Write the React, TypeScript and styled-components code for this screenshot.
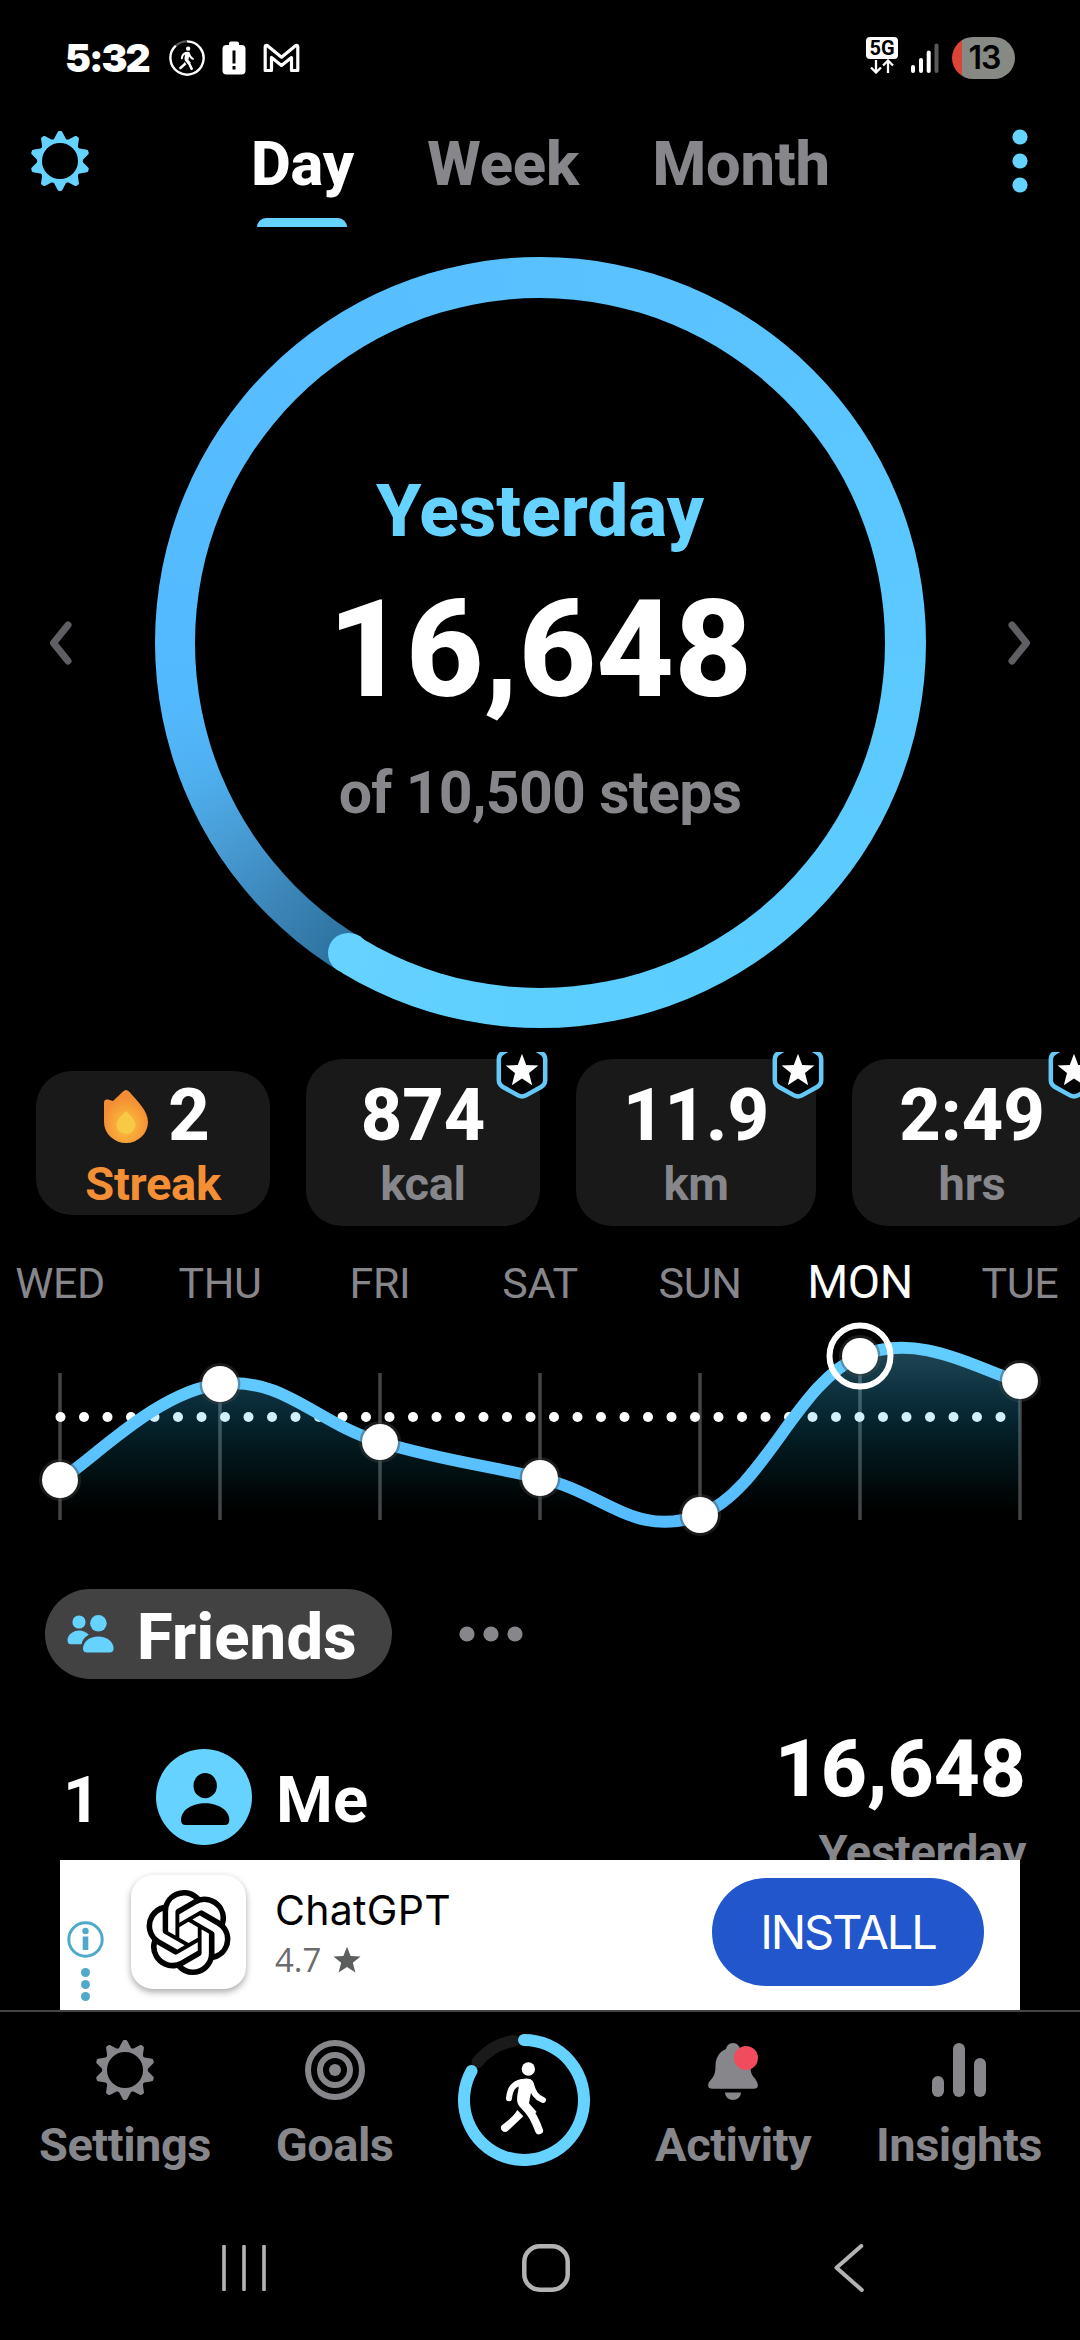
import React from "react";
import styled, { createGlobalStyle } from "styled-components";

const BLUE = "#65d2ff";
const GREY = "#86868b";
const UI = `Roboto, "Noto Sans", sans-serif`;
const SYS = `Inter, Roboto, sans-serif`;

const Global = createGlobalStyle`
  html, body { margin: 0; padding: 0; background: #000; }
  * { box-sizing: border-box; }
  svg { display: block; flex: none; }
`;

const Screen = styled.div`
  width: 1080px;
  height: 2340px;
  display: flex;
  flex-direction: column;
  overflow: hidden;
  background: #000;
  color: #fff;
  font-family: ${UI};
  font-weight: 700;
`;

/* ---------- status bar ---------- */

const StatusBar = styled.div`
  height: 115px;
  flex: none;
  display: flex;
  align-items: center;
  justify-content: space-between;
  padding: 0 65px 0 65px;
`;
const StatusSide = styled.div<{ $gap: number }>`
  display: flex;
  align-items: center;
  gap: ${(p) => p.$gap}px;
`;
const Clock = styled.span`
  font: 900 39px/48px ${SYS};
  letter-spacing: -2px;
  width: 87px;
  white-space: nowrap;
`;
const Network = styled.div`
  display: flex;
  flex-direction: column;
  align-items: center;
  width: 32px;
  margin-top: -4px;
`;
const NetworkTag = styled.span`
  width: 32px;
  height: 22px;
  border-radius: 4px;
  background: #fff;
  color: #000;
  text-align: center;
  font: 700 20px/22px ${UI};
`;
const Battery = styled.div`
  width: 63px;
  height: 42px;
  border-radius: 21px;
  background: linear-gradient(90deg, #db4437 0 10px, #868984 10px);
  color: #000;
  text-align: center;
  padding-left: 2px;
  font: 600 32px/42px ${SYS};
  letter-spacing: -1px;
`;

/* ---------- header ---------- */

const Header = styled.header`
  height: 112px;
  flex: none;
  display: flex;
  align-items: flex-start;
  padding: 0 52px 0 30px;
`;
const IconSlot = styled.div<{ $end?: boolean }>`
  height: 92px;
  display: flex;
  align-items: center;
  margin-left: ${(p) => (p.$end ? "auto" : "0")};
`;
const Tabs = styled.nav`
  display: flex;
  gap: 73.5px;
  margin-left: 161px;
`;
const Tab = styled.div<{ $on?: boolean }>`
  display: flex;
  flex-direction: column;
  align-items: center;
  font-size: 61.4px;
  font-weight: 800;
  letter-spacing: -0.2px;
  line-height: 98px;
  color: ${(p) => (p.$on ? "#fff" : GREY)};
  &::after {
    content: "";
    width: 90px;
    height: 9px;
    margin-top: 5px;
    border-radius: 9px 9px 0 0;
    background: ${(p) => (p.$on ? BLUE : "transparent")};
  }
`;

/* ---------- body ---------- */

const Content = styled.main`
  flex: 1;
  min-height: 0;
  overflow: hidden;
`;
const Hero = styled.section`
  display: flex;
  align-items: center;
  justify-content: space-between;
  height: 825px;
  padding: 30px 48px 24px;
`;
const Ring = styled.div`
  position: relative;
  width: 771px;
  height: 771px;
  padding: 40.5px;
  border-radius: 50%;
  background: conic-gradient(
    from 211deg,
    #2b709c 0deg,
    #3c86b9 15deg,
    #489dd5 27deg,
    #4fb0f0 38deg,
    #53b9ff 50deg,
    #5ac1ff 150deg,
    #5ccaff 260deg,
    #5ccfff 330deg,
    #65d2ff 360deg
  );
`;
const RingCap = styled.i`
  position: absolute;
  left: 173.5px;
  top: 675.5px;
  width: 40.5px;
  height: 40.5px;
  border-radius: 50%;
  background: ${BLUE};
`;
const RingBody = styled.div`
  height: 100%;
  border-radius: 50%;
  background: #000;
  display: flex;
  flex-direction: column;
  align-items: center;
  justify-content: center;
  padding-top: 23px;
`;
const HeroDay = styled.div`
  font-size: 73px;
  font-weight: 800;
  line-height: 100px;
  color: ${BLUE};
`;
const HeroSteps = styled.div`
  font-size: 135px;
  font-weight: 800;
  line-height: 178px;
`;
const HeroGoal = styled.div`
  font-size: 59px;
  line-height: 108px;
  letter-spacing: -0.7px;
  color: ${GREY};
`;

const Stats = styled.section`
  display: flex;
  align-items: center;
  gap: 36px;
  height: 183px;
  padding: 7px 0 9px 36px;
  overflow: hidden;
`;
const StatCard = styled.div<{ $w: number; $h?: number }>`
  position: relative;
  flex: none;
  width: ${(p) => p.$w}px;
  height: ${(p) => p.$h ?? 167}px;
  border-radius: 36px;
  background: #191919;
  display: flex;
  flex-direction: column;
  align-items: center;
  justify-content: center;
`;
const StatValue = styled.div<{ $icon?: boolean }>`
  display: flex;
  align-items: center;
  gap: 20px;
  padding-left: ${(p) => (p.$icon ? 8 : 0)}px;
  font-size: 72px;
  font-weight: 800;
  line-height: 83px;
`;
const StatUnit = styled.div<{ $hot?: boolean }>`
  font-size: 47px;
  line-height: 54px;
  letter-spacing: -0.3px;
  color: ${(p) => (p.$hot ? "#f48f35" : GREY)};
`;
const Badge = styled.div`
  position: absolute;
  right: -9px;
  top: -19px;
`;

const Days = styled.div`
  display: grid;
  grid-template-columns: repeat(7, 160px);
  align-items: baseline;
  margin: 0 -20px;
  padding-top: 12px;
  height: 84px;
`;
const DayName = styled.span<{ $on?: boolean }>`
  text-align: center;
  font-weight: 400;
  font-size: ${(p) => (p.$on ? 47 : 43)}px;
  line-height: 70px;
  letter-spacing: -0.4px;
  color: ${(p) => (p.$on ? "#fff" : GREY)};
`;

const FriendsBar = styled.div`
  display: flex;
  align-items: center;
  gap: 67px;
  padding: 40px 0 0 45px;
`;
const Pill = styled.div`
  width: 347px;
  height: 90px;
  border-radius: 45px;
  background: #424242;
  display: flex;
  align-items: center;
  gap: 23px;
  padding-left: 22px;
  font-size: 65px;
  font-weight: 800;
  line-height: 94px;
`;
const PillText = styled.span`
  padding-top: 6px;
  letter-spacing: 0.2px;
`;
const Row = styled.div`
  display: flex;
  align-items: center;
  height: 164px;
  margin-top: 42px;
  padding: 0 54px 0 63px;
`;
const RowMain = styled.div`
  display: flex;
  align-items: center;
  height: 164px;
  padding-bottom: 12px;
  font-size: 65px;
`;
const Rank = styled.span`
  width: 93px;
  padding-top: 6px;
`;
const Name = styled.span`
  padding-top: 6px;
  margin-left: 24px;
`;
const RowScore = styled.div`
  margin-left: auto;
  padding-top: 2px;
  text-align: right;
`;
const Score = styled.div`
  font-size: 80px;
  font-weight: 800;
  line-height: 96px;
`;
const ScoreDay = styled.div`
  font-size: 47px;
  line-height: 70px;
  letter-spacing: -0.3px;
  color: ${GREY};
`;

/* ---------- ad ---------- */

const Ad = styled.aside`
  flex: none;
  height: 150px;
  margin: 0 60px;
  background: #fff;
  color: #000;
  display: flex;
  align-items: flex-start;
`;
const AdMarks = styled.div`
  width: 51px;
  padding: 61px 0 0 7px;
`;
const AdIcon = styled.div`
  width: 115px;
  height: 114px;
  margin: 15px 0 0 20px;
  border-radius: 22px;
  background: #fff;
  box-shadow: 0 3px 7px rgba(0, 0, 0, 0.35);
  display: flex;
  align-items: center;
  justify-content: center;
`;
const AdText = styled.div`
  margin: 25px 0 0 29px;
`;
const AdTitle = styled.div`
  font: 400 41px/50px ${SYS};
  letter-spacing: 0.3px;
`;
const AdRating = styled.div`
  display: flex;
  align-items: center;
  gap: 12px;
  margin-top: 2px;
  color: #6b6b70;
  font: 400 33px/46px "Open Sans", sans-serif;
`;
const Install = styled.button`
  margin: 18px 36px 0 auto;
  width: 272px;
  height: 108px;
  border: 0;
  border-radius: 54px;
  background: #2156cd;
  color: #fff;
  padding: 0;
  font: 400 47px/108px ${SYS};
  letter-spacing: -2.1px;
`;

/* ---------- bottom bars ---------- */

const BottomNav = styled.nav`
  flex: none;
  height: 190px;
  border-top: 2px solid #444;
  display: flex;
  justify-content: space-between;
  padding: 28px 38px 0 39px;
`;
const NavItem = styled.div`
  display: flex;
  flex-direction: column;
  align-items: center;
  gap: 17px;
  font-size: 47px;
  line-height: 56px;
  letter-spacing: -0.5px;
  color: ${GREY};
`;
const NavCenter = styled.div`
  margin-top: -6px;
`;
const SystemBar = styled.div`
  flex: none;
  height: 140px;
  display: flex;
  align-items: center;
  padding: 0 0 4px 222px;
  gap: 256px;
`;
const BackKey = styled.div`
  padding-left: 8px;
`;

/* ---------- drawings ---------- */

function Gear({ color }: { color: string }) {
  let d = "";
  for (let i = 0; i < 10; i++) {
    const at = (deg: number, r: number) => {
      const a = ((deg - 90) * Math.PI) / 180;
      return `${(30 + r * Math.cos(a)).toFixed(2)} ${(30 + r * Math.sin(a)).toFixed(2)}`;
    };
    const a = i * 36;
    d += `${i ? "L" : "M"}${at(a - 2, 28.4)}L${at(a + 2, 28.4)}L${at(a + 11.5, 22.2)}Q${at(a + 18, 20.2)} ${at(a + 24.5, 22.2)}`;
  }
  return (
    <svg width="60" height="60" viewBox="0 0 60 60">
      <path
        d={`${d}ZM30 10.5a19.5 19.5 0 1 0 0 39a19.5 19.5 0 1 0 0-39Z`}
        fill={color}
        fillRule="evenodd"
        stroke={color}
        strokeWidth="3"
        strokeLinejoin="round"
      />
    </svg>
  );
}

function WalkerShape() {
  return (
    <g fill="none" stroke="#fff" strokeLinecap="round" strokeLinejoin="round">
      <circle cx="295" cy="177" r="20" fill="#fff" stroke="none" />
      <path d="M276 216C248 222 240 238 237 265" strokeWidth="18" />
      <path d="M302 222C310 248 318 262 339 270" strokeWidth="18" />
      <path
        d="M262 214C275 204 300 201 308 213C315 224 311 236 303 248L297 280L320 306L300 322L266 286C258 272 262 255 266 234Z"
        fill="#fff"
        stroke="none"
      />
      <path d="M280 284C305 308 315 330 327 361" strokeWidth="24" />
      <path d="M262 300L280 319L232 364C222 370 208 360 214 347C232 334 252 318 262 300Z" fill="#fff" stroke="none" />
    </g>
  );
}

function polar(cx: number, cy: number, r: number, deg: number) {
  const a = ((deg - 90) * Math.PI) / 180;
  return `${cx + r * Math.cos(a)} ${cy + r * Math.sin(a)}`;
}

function NavRing() {
  return (
    <svg width="132" height="132" viewBox="0 0 132 132">
      <g fill="none" strokeWidth="12" strokeLinecap="round">
        <path d={`M${polar(66, 66, 60, 309)}A60 60 0 0 1 ${polar(66, 66, 60, 350)}`} stroke="#1a1a1a" />
        <path d={`M66 6A60 60 0 1 1 ${polar(66, 66, 60, 299)}`} stroke={BLUE} />
      </g>
      <g transform="translate(-28 -24) scale(0.3333)">
        <WalkerShape />
      </g>
    </svg>
  );
}

function Star({ size, color }: { size: number; color: string }) {
  return (
    <svg width={size} height={size} viewBox="0 0 24 24">
      <path d="M12 0.6L15.1 8.5L23.6 9L17 14.4L19.2 22.8L12 18.1L4.8 22.8L7 14.4L0.4 9L8.9 8.5Z" fill={color} />
    </svg>
  );
}

function GoalBadge() {
  return (
    <Badge>
      <svg width="54" height="60" viewBox="0 0 54 60">
        <path
          d="M23.5 3.6Q27 1.8 30.5 3.6L46 12.5Q50.2 15 50.2 19.5V40Q50.2 44.5 46 47L30.5 55.6Q27 57.4 23.5 55.6L8 47Q3.8 44.5 3.8 40V19.5Q3.8 15 8 12.5Z"
          fill="#000"
          fillOpacity="0.85"
          stroke="#64c9f6"
          strokeWidth="4.5"
        />
        <path d="M27 13.8L31.2 25L43.4 25.6L34 33L37.2 45.2L27 38.6L16.8 45.2L20 33L10.6 25.6L22.8 25Z" fill="#fff" />
      </svg>
    </Badge>
  );
}

function Flame() {
  return (
    <svg width="44" height="54" viewBox="0 0 44 54">
      <defs>
        <radialGradient id="flame" cx="0.5" cy="0.66" r="0.55">
          <stop offset="0.35" stopColor="#f9b03c" />
          <stop offset="0.95" stopColor="#f48d33" />
        </radialGradient>
      </defs>
      <path
        d="M19 2.6Q22 -0.6 25 2.6C33 11.5 44 22 44 33A22 21 0 0 1 0 33V14Q0 10 4 10.6L9 12Z"
        fill="url(#flame)"
      />
      <path d="M22 22C26 26 31.5 31 31.5 36A9.5 9 0 0 1 12.5 36C12.5 31 18 26 22 22Z" fill="#f8c944" />
    </svg>
  );
}

const ChevronIcon = styled.svg<{ $flip?: boolean }>`
  transform: ${(p) => (p.$flip ? "scaleX(-1)" : "none")};
`;

function Chevron({ flip }: { flip?: boolean }) {
  return (
    <ChevronIcon $flip={flip} width="24" height="44" viewBox="0 0 24 44">
      <path d="M20 4L5.500 22L20 40" fill="none" stroke="#5f5f63" strokeWidth="7" strokeLinecap="round" strokeLinejoin="round" />
    </ChevronIcon>
  );
}

/* ---------- weekly chart ---------- */

const week = [
  { name: "WED", y: 1480 },
  { name: "THU", y: 1384 },
  { name: "FRI", y: 1442 },
  { name: "SAT", y: 1478 },
  { name: "SUN", y: 1515 },
  { name: "MON", y: 1356, on: true },
  { name: "TUE", y: 1381 },
];
const pts = week.map((d, i) => [60 + i * 160, d.y]);

function smoothLine() {
  const at = (i: number) => pts[Math.max(0, Math.min(pts.length - 1, i))];
  const k = 0.2;
  let d = `M${pts[0].join(" ")}`;
  for (let i = 1; i < pts.length; i++) {
    const [a, b, c, e] = [at(i - 2), at(i - 1), at(i), at(i + 1)];
    d += `C${b[0] + (c[0] - a[0]) * k} ${b[1] + (c[1] - a[1]) * k} ${c[0] - (e[0] - b[0]) * k} ${c[1] - (e[1] - b[1]) * k} ${c[0]} ${c[1]}`;
  }
  return d;
}

function WeekChart() {
  const line = smoothLine();
  return (
    <svg width="1080" height="230" viewBox="0 1319 1080 230">
      <defs>
        <linearGradient id="area" gradientUnits="userSpaceOnUse" x1="0" y1="1347" x2="0" y2="1517">
          <stop offset="0" stopColor="#64d2ff" stopOpacity="0.34" />
          <stop offset="0.4" stopColor="#1fb9ef" stopOpacity="0.21" />
          <stop offset="0.75" stopColor="#0a8090" stopOpacity="0.12" />
          <stop offset="1" stopColor="#004040" stopOpacity="0" />
        </linearGradient>
        <linearGradient id="line" x1="0" y1="0" x2="0" y2="1">
          <stop offset="0" stopColor="#62cdff" />
          <stop offset="1" stopColor="#55bbff" />
        </linearGradient>
      </defs>
      {pts.map(([x]) => (
        <rect key={x} x={x - 1.75} y="1373" width="3.5" height="147" fill="#444446" />
      ))}
      {Array.from({ length: 41 }, (_, i) => (
        <circle key={i} cx={60.5 + i * 23.5} cy="1417" r="5" fill="#fff" />
      ))}
      <path d={`${line}V1520H60Z`} fill="url(#area)" />
      <path d={line} fill="none" stroke="url(#line)" strokeWidth="12" />
      {week.map((d, i) => (
        <g key={d.name}>
          <circle cx={pts[i][0]} cy={d.y} r="20.5" fill="#000" fillOpacity="0.35" />
          <circle cx={pts[i][0]} cy={d.y} r="19.5" fill="none" stroke="#fff" strokeOpacity="0.1" strokeWidth="3" />
          <circle cx={pts[i][0]} cy={d.y} r="18" fill="#fff" />
          {d.on && <circle cx={pts[i][0]} cy={d.y} r="30.5" fill="none" stroke="#fff" strokeWidth="6" />}
        </g>
      ))}
    </svg>
  );
}

const OPENAI =
  "M22.2819 9.8211a5.9847 5.9847 0 0 0-.5157-4.9108 6.0462 6.0462 0 0 0-6.5098-2.9A6.0651 6.0651 0 0 0 4.9807 4.1818a5.9847 5.9847 0 0 0-3.9977 2.9 6.0462 6.0462 0 0 0 .7427 7.0966 5.98 5.98 0 0 0 .511 4.9107 6.051 6.051 0 0 0 6.5146 2.9001A5.9847 5.9847 0 0 0 13.2599 24a6.0557 6.0557 0 0 0 5.7718-4.2058 5.9894 5.9894 0 0 0 3.9977-2.9001 6.0557 6.0557 0 0 0-.7475-7.0729zm-9.022 12.6081a4.4755 4.4755 0 0 1-2.8764-1.0408l.1419-.0804 4.7783-2.7582a.7948.7948 0 0 0 .3927-.6813v-6.7369l2.02 1.1686a.071.071 0 0 1 .038.052v5.5826a4.504 4.504 0 0 1-4.4945 4.4944zm-9.6607-4.1254a4.4708 4.4708 0 0 1-.5346-3.0137l.142.0852 4.783 2.7582a.7712.7712 0 0 0 .7806 0l5.8428-3.3685v2.3324a.0804.0804 0 0 1-.0332.0615L9.74 19.9502a4.4992 4.4992 0 0 1-6.1408-1.6464zM2.3408 7.8956a4.485 4.485 0 0 1 2.3655-1.9728V11.6a.7664.7664 0 0 0 .3879.6765l5.8144 3.3543-2.0201 1.1685a.0757.0757 0 0 1-.071 0l-4.8303-2.7865A4.504 4.504 0 0 1 2.3408 7.872zm16.5963 3.8558L13.1038 8.364 15.1192 7.2a.0757.0757 0 0 1 .071 0l4.8303 2.7913a4.4944 4.4944 0 0 1-.6765 8.1042v-5.6772a.79.79 0 0 0-.407-.667zm2.0107-3.0231l-.142-.0852-4.7735-2.7818a.7759.7759 0 0 0-.7854 0L9.409 9.2297V6.8974a.0662.0662 0 0 1 .0284-.0615l4.8303-2.7866a4.4992 4.4992 0 0 1 6.6802 4.66zM8.3065 12.863l-2.02-1.1638a.0804.0804 0 0 1-.038-.0567V6.0742a4.4992 4.4992 0 0 1 7.3757-3.4537l-.142.0805L8.704 5.459a.7948.7948 0 0 0-.3927.6813zm1.0976-2.3654l2.602-1.4998 2.6069 1.4998v2.9994l-2.5974 1.4997-2.6067-1.4997Z";

export default function App() {
  return (
    <>
      <Global />
      <Screen>
        <StatusBar>
          <StatusSide $gap={17}>
            <Clock>5:32</Clock>
            <svg width="36" height="36" viewBox="0 0 36 36">
              <path d={`M18 1.4A16.6 16.6 0 1 1 ${polar(18, 18, 16.6, 318)}`} fill="none" stroke="#fff" strokeWidth="2.4" />
              <path d={`M${polar(18, 18, 16.6, 318)}A16.6 16.6 0 0 1 18 1.4`} fill="none" stroke="#555" strokeWidth="2.4" />
              <g transform="translate(-13 -10.6) scale(0.109)">
                <WalkerShape />
              </g>
            </svg>
            <svg width="24" height="34" viewBox="0 0 24 34">
              <path
                fillRule="evenodd"
                d="M9 0.5h6a2 2 0 0 1 2 2V4h2.500a4 4 0 0 1 4 4v21.500a4 4 0 0 1-4 4H4.500a4 4 0 0 1-4-4V8a4 4 0 0 1 4-4H7V2.500a2 2 0 0 1 2-2ZM10.500 9.500v13h3v-13ZM10.500 25v3.500h3V25Z"
                fill="#fff"
              />
            </svg>
            <svg width="37" height="30" viewBox="0 0 37 30">
              <path
                d="M2.200 27.500V4Q2.200 2 4.200 2.600L18.500 14.200L32.800 2.600Q34.800 2 34.800 4V27.500H28.500V14.500L18.500 22.500L8.500 14.500V27.500Z"
                fill="none"
                stroke="#fff"
                strokeWidth="3.200"
                strokeLinejoin="round"
              />
            </svg>
          </StatusSide>
          <StatusSide $gap={13}>
            <Network>
              <NetworkTag>5G</NetworkTag>
              <svg width="26" height="15" viewBox="0 0 26 15">
                <path d="M7 1V13M2 8.500L7 13.500L12 8.500M19 14V2M14 6.500L19 1.500L24 6.500" fill="none" stroke="#fff" strokeWidth="2.300" />
              </svg>
            </Network>
            <svg width="28" height="30" viewBox="0 0 28 30">
              <rect x="0" y="22" width="4" height="8" rx="2" fill="#fff" />
              <rect x="8" y="15" width="4" height="15" rx="2" fill="#fff" />
              <rect x="15.700" y="7.500" width="4" height="22.500" rx="2" fill="#fff" />
              <rect x="23.500" y="0.500" width="4" height="29.500" rx="2" fill="#5a5a5a" />
            </svg>
            <Battery>13</Battery>
          </StatusSide>
        </StatusBar>

        <Header>
          <IconSlot>
            <Gear color={BLUE} />
          </IconSlot>
          <Tabs>
            <Tab $on>Day</Tab>
            <Tab>Week</Tab>
            <Tab>Month</Tab>
          </Tabs>
          <IconSlot $end>
            <svg width="16" height="66" viewBox="0 0 16 66" fill={BLUE}>
              <circle cx="8" cy="9" r="7.600" />
              <circle cx="8" cy="33" r="7.600" />
              <circle cx="8" cy="57" r="7.600" />
            </svg>
          </IconSlot>
        </Header>

        <Content>
          <Hero>
            <Chevron />
            <Ring>
              <RingCap />
              <RingBody>
                <HeroDay>Yesterday</HeroDay>
                <HeroSteps>16,648</HeroSteps>
                <HeroGoal>of 10,500 steps</HeroGoal>
              </RingBody>
            </Ring>
            <Chevron flip />
          </Hero>

          <Stats>
            <StatCard $w={234} $h={144}>
              <StatValue $icon>
                <Flame />
                2
              </StatValue>
              <StatUnit $hot>Streak</StatUnit>
            </StatCard>
            <StatCard $w={234}>
              <StatValue>874</StatValue>
              <StatUnit>kcal</StatUnit>
              <GoalBadge />
            </StatCard>
            <StatCard $w={240}>
              <StatValue>11.9</StatValue>
              <StatUnit>km</StatUnit>
              <GoalBadge />
            </StatCard>
            <StatCard $w={240}>
              <StatValue>2:49</StatValue>
              <StatUnit>hrs</StatUnit>
              <GoalBadge />
            </StatCard>
          </Stats>

          <Days>
            {week.map((d) => (
              <DayName key={d.name} $on={d.on}>
                {d.name}
              </DayName>
            ))}
          </Days>
          <WeekChart />

          <FriendsBar>
            <Pill>
              <svg width="47" height="38" viewBox="0 0 47 38" fill={BLUE}>
                <ellipse cx="12" cy="7" rx="6.600" ry="6.600" />
                <path d="M0.500 25C0.500 20 6 15.500 12 15.500C16 15.500 19.500 17.200 21.800 19.800C18 21.800 15.500 24.800 14.500 29.200H4Q0.500 29.200 0.500 25Z" />
                <circle cx="31.400" cy="8.300" r="8.300" />
                <path d="M16 33.500C16 27 22.500 21.500 31.300 21.500C40 21.500 46.600 27 46.600 33.500Q46.600 37.500 42.500 37.500H20Q16 37.500 16 33.500Z" />
              </svg>
              <PillText>Friends</PillText>
            </Pill>
            <svg width="64" height="16" viewBox="0 0 64 16" fill={GREY}>
              <circle cx="8" cy="8" r="7.600" />
              <circle cx="32" cy="8" r="7.600" />
              <circle cx="56" cy="8" r="7.600" />
            </svg>
          </FriendsBar>
          <Row>
            <RowMain>
              <Rank>1</Rank>
              <svg width="96" height="96" viewBox="0 0 96 96">
                <circle cx="48" cy="48" r="48" fill={BLUE} />
                <ellipse cx="49.200" cy="36.700" rx="11.700" ry="12.600" />
                <path d="M25 71C25 61 36 54.200 49.200 54.200C62 54.200 73.300 61 73.300 71Q73.300 76 69 76H29.500Q25 76 25 71Z" />
              </svg>
              <Name>Me</Name>
            </RowMain>
            <RowScore>
              <Score>16,648</Score>
              <ScoreDay>Yesterday</ScoreDay>
            </RowScore>
          </Row>
        </Content>

        <Ad>
          <AdMarks>
            <svg width="37" height="84" viewBox="0 0 37 84" fill="#50a9cb">
              <circle cx="18.500" cy="18.500" r="16.700" fill="none" stroke="#50a9cb" strokeWidth="3" />
              <circle cx="18.500" cy="10" r="3.200" />
              <rect x="15.700" y="15.500" width="5.600" height="13.500" />
              <circle cx="18.500" cy="51.500" r="4.500" />
              <circle cx="18.500" cy="63.500" r="4.500" />
              <circle cx="18.500" cy="75.500" r="4.500" />
            </svg>
          </AdMarks>
          <AdIcon>
            <svg width="85" height="85" viewBox="0 0 24 24">
              <path d={OPENAI} fill="#000" />
            </svg>
          </AdIcon>
          <AdText>
            <AdTitle>ChatGPT</AdTitle>
            <AdRating>
              4.7
              <Star size={28} color="#5c5d5d" />
            </AdRating>
          </AdText>
          <Install>INSTALL</Install>
        </Ad>

        <BottomNav>
          <NavItem>
            <Gear color={GREY} />
            Settings
          </NavItem>
          <NavItem>
            <svg width="60" height="60" viewBox="0 0 60 60">
              <g fill="none" stroke={GREY} strokeWidth="6">
                <circle cx="30" cy="30" r="27" />
                <circle cx="30" cy="30" r="15" />
              </g>
              <circle cx="30" cy="30" r="6" fill={GREY} />
            </svg>
            Goals
          </NavItem>
          <NavCenter>
            <NavRing />
          </NavCenter>
          <NavItem>
            <svg width="60" height="60" viewBox="0 0 60 60">
              <path
                d="M30 3C34 3 36.500 6 37 9C44 12 47.500 18 47.500 26C47.500 32 48.500 35 52 38.500L54.300 42.500Q56.500 48.700 51 48.700H9Q3.500 48.700 5.700 42.500L8.500 39C11.500 35.500 12.500 32 12.500 26C12.500 18 16 12 23 9C23.500 6 26 3 30 3ZM22 52.500H38C38 57 34 60 30 60C26 60 22 57 22 52.500Z"
                fill={GREY}
              />
              <circle cx="43" cy="18" r="12" fill="#f04c5d" />
            </svg>
            Activity
          </NavItem>
          <NavItem>
            <svg width="60" height="60" viewBox="0 0 60 60" fill={GREY}>
              <rect x="3" y="36" width="12" height="21" rx="6" />
              <rect x="24" y="3" width="12" height="54" rx="6" />
              <rect x="45" y="18" width="12" height="39" rx="6" />
            </svg>
            Insights
          </NavItem>
        </BottomNav>

        <SystemBar>
          <svg width="44" height="46" viewBox="0 0 44 46">
            <path d="M2 1.500V44.500M22 1.500V44.500M42 1.500V44.500" stroke="#b4b2b5" strokeWidth="3.600" strokeLinecap="round" />
          </svg>
          <svg width="48" height="48" viewBox="0 0 48 48">
            <rect x="2.300" y="2.300" width="43.400" height="43.400" rx="15.500" fill="none" stroke="#b4b2b5" strokeWidth="4.500" />
          </svg>
          <BackKey>
            <svg width="30" height="48" viewBox="0 0 30 48">
              <path d="M27.300 2L2.500 23.700L27.800 46" fill="none" stroke="#b4b2b5" strokeWidth="4" strokeLinecap="round" strokeLinejoin="round" />
            </svg>
          </BackKey>
        </SystemBar>
      </Screen>
    </>
  );
}
